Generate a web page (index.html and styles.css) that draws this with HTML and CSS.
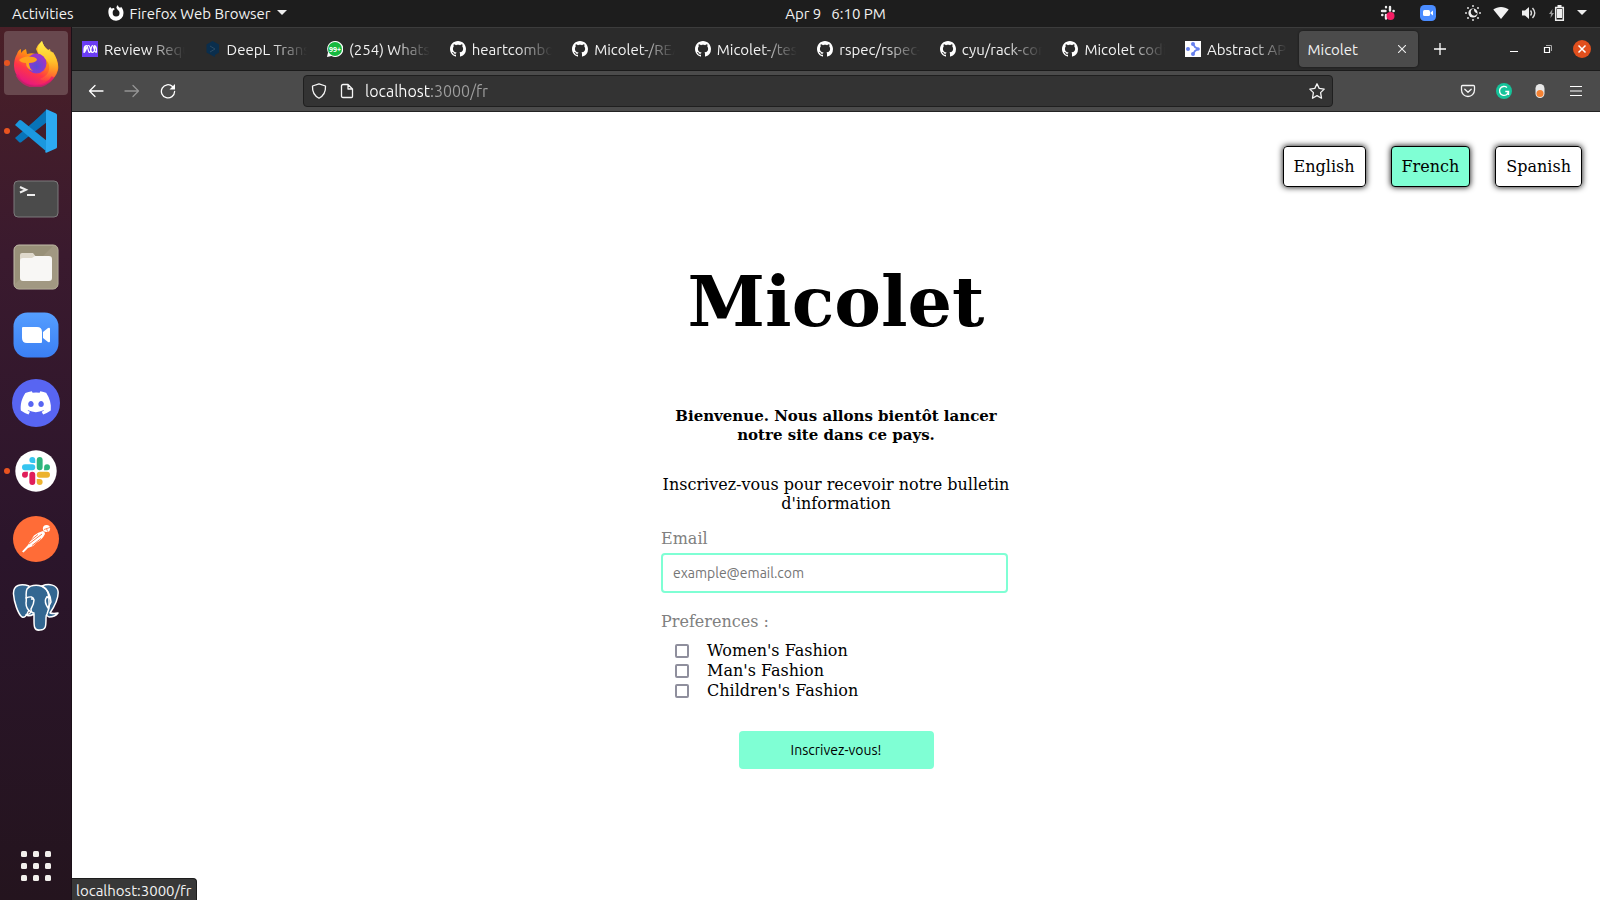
FILE: index.html
```html
<!DOCTYPE html>
<html lang="fr">
<head>
<meta charset="utf-8">
<title>Micolet</title>
<link rel="stylesheet" href="styles.css">
</head>
<body>
<svg class="defs" aria-hidden="true">
  <symbol id="github" viewBox="0 0 16 16"><path fill="#fff" d="M8 0C3.58 0 0 3.58 0 8c0 3.54 2.29 6.53 5.47 7.59.4.07.55-.17.55-.38 0-.19-.01-.82-.01-1.49-2.01.37-2.53-.49-2.69-.94-.09-.23-.48-.94-.82-1.13-.28-.15-.68-.52-.01-.53.63-.01 1.08.58 1.23.82.72 1.21 1.87.87 2.33.66.07-.52.28-.87.51-1.07-1.78-.2-3.64-.89-3.64-3.95 0-.87.31-1.59.82-2.15-.08-.2-.36-1.02.08-2.12 0 0 .67-.21 2.2.82.64-.18 1.32-.27 2-.27s1.36.09 2 .27c1.53-1.04 2.2-.82 2.2-.82.44 1.1.16 1.92.08 2.12.51.56.82 1.27.82 2.15 0 3.07-1.87 3.75-3.65 3.95.29.25.54.73.54 1.48 0 1.07-.01 1.93-.01 2.2 0 .21.15.46.55.38A8.01 8.01 0 0 0 16 8c0-4.42-3.58-8-8-8z"/></symbol>
  <symbol id="slack-blue" viewBox="0 0 24 24"><path d="M8.834 5.042a2.528 2.528 0 0 1-2.521-2.52A2.528 2.528 0 0 1 8.834 0a2.528 2.528 0 0 1 2.521 2.522v2.52H8.834zM8.834 6.313a2.528 2.528 0 0 1 2.521 2.521 2.528 2.528 0 0 1-2.521 2.521H2.522A2.528 2.528 0 0 1 0 8.834a2.528 2.528 0 0 1 2.522-2.521h6.312z"/></symbol>
</svg>
<header class="topbar">
  <div class="topbar-left">
    <button class="top-item" type="button">Activities</button>
    <button class="top-item app-menu" type="button">
      <svg width="16" height="16" viewBox="0 0 16 16"><path fill="#fff" fill-rule="evenodd" d="M1 3.2 2.2 2l1.2 1.5L6 3l.6 1.4C5 5 4.500 6.500 4.700 8a3.400 3.400 0 0 0 6.800.2c.1-1.800-1-2.800-2.300-4C7.800 2.800 8.500 1 10 0c-.1 1.500.9 2 2.100 3l.9-1.200c1.500 1.500 2.500 3.600 2.500 6.200A7.500 7.500 0 0 1 .5 8.500C.2 6.500.4 4.700 1 3.200z"/></svg>
      <span>Firefox Web Browser</span>
      <svg width="10" height="6" viewBox="0 0 10 6"><path fill="#eee" d="M0 0h10L5 5z"/></svg>
    </button>
  </div>
  <button class="top-item clock" type="button"><span>Apr 9</span><span>6:10 PM</span></button>
  <div class="tray">
    <svg class="tray-slack" width="16" height="16" viewBox="0 0 16 16"><g stroke="#eee" stroke-width="2.400" stroke-linecap="round"><path d="M2 6h3.500M6 2.200V2M10 2v3.500M13.500 6h.2M2.200 10h.2M6 10v3.500"/></g><circle cx="10.500" cy="11" r="4" fill="#f51d64"/></svg>
    <svg class="tray-zoom" width="16" height="16" viewBox="0 0 16 16"><rect width="16" height="16" rx="4.500" fill="#4a8cff"/><rect x="3" y="5" width="7" height="6" rx="1.500" fill="#fff"/><path fill="#fff" d="m10.500 7.500 2.500-2v5l-2.500-2z"/></svg>
    <svg width="16" height="16" viewBox="0 0 16 16"><circle cx="8" cy="8" r="4.600" fill="#eee"/><path fill="#1d1d1d" d="M9 3.800a3.400 3.400 0 1 0 3.300 4.700A4 4 0 0 1 9 3.800z"/><g fill="#ddd"><circle cx="8" cy="1" r="1"/><circle cx="8" cy="15" r="1"/><circle cx="1" cy="8" r="1"/><circle cx="15" cy="8" r="1"/><circle cx="3" cy="3" r="1"/><circle cx="13" cy="3" r="1"/><circle cx="3" cy="13" r="1"/><circle cx="13" cy="13" r="1"/></g></svg>
    <svg width="16" height="16" viewBox="0 0 16 16"><path fill="#f2f2f2" d="M.3 4.600C4.500 1 11.500 1 15.700 4.600L8 14z"/></svg>
    <svg width="16" height="16" viewBox="0 0 16 16"><path fill="#eee" d="M1 5.500h3L8 2v12l-4-3.500H1z"/><path fill="none" stroke="#ddd" stroke-width="1.400" d="M9.500 5.500q2 2.500 0 5M11.500 3q4.500 5 0 10"/></svg>
    <svg width="16" height="16" viewBox="0 0 16 16"><path fill="#999" d="M3.500 4 0 9h2l-.5 4L5 8H3z"/><path fill="#eee" d="M8 4h5v9H8z"/><path fill="none" stroke="#eee" stroke-width="1.500" d="M6.700 2.500h7.600v12.700H6.700z"/><path fill="#eee" d="M8.500 0h4v2h-4z"/></svg>
    <svg width="10" height="6" viewBox="0 0 10 6"><path fill="#eee" d="M0 0h10L5 5z"/></svg>
  </div>
</header>
<div class="desktop">
  <nav class="dock" aria-label="Dock">
    <button class="dock-item running focused" type="button" aria-label="Firefox">
      <svg width="48" height="48" viewBox="0 0 48 48"><defs><linearGradient id="ff" x1=".8" y1="0" x2=".3" y2="1"><stop offset="0" stop-color="#fff44f"/><stop offset=".4" stop-color="#ff980e"/><stop offset=".7" stop-color="#ff3647"/><stop offset="1" stop-color="#e31587"/></linearGradient><linearGradient id="fy" x1="0" y1="0" x2="0" y2="1"><stop offset="0" stop-color="#fff04a"/><stop offset=".5" stop-color="#ffc32b"/><stop offset="1" stop-color="#ff7a2e" stop-opacity=".2"/></linearGradient><radialGradient id="fp" cx=".5" cy=".65"><stop offset="0" stop-color="#594bd8"/><stop offset="1" stop-color="#9b36c8"/></radialGradient></defs>
      <path fill="url(#ff)" d="M5 15c1-3 2-4 4-5v4q2-3 5-4l1 5q8-2 12 2L24 10q2-5 6-8 1 5 6 9l2-1 1 4 2-1c4 6 6 12 5 18A22.300 20.500 0 0 1 2 27q0-7 3-12z"/><path fill="url(#fy)" d="M30 2q1 5 6 9l2 2 1-1c8 9 9 20 2 27-5 4-10 3-13 1 7-3 10-7 9-14-1-6-8-8-11-13-1-4 1-8 4-11z"/><circle cx="24.500" cy="24.500" r="10" fill="url(#fp)"/><path fill="#ffa11c" d="M7 21q5-5 14-3 4 1 4 3-2 3-8 3 0 5 4 8-7-2-7-8-5 0-7-3z"/><path fill="none" stroke="#e31572" stroke-width="3" opacity=".7" d="M5 36a20 18 0 0 0 36 2"/></svg>
    </button>
    <button class="dock-item running" type="button" aria-label="Visual Studio Code">
      <svg width="48" height="48" viewBox="0 0 48 48"><path fill="#0874b8" d="m3 31 4 4q1 1 2.500 0L35 15V3z"/><path fill="#1b98df" d="m3 18 4-4.500q1-1 2.500 0L35 34v11z"/><path fill="#0874b8" d="M18 19 34 3v12L24 23z"/><path fill="#2caaf2" d="M34 3q0-1 1-.5l9 4q1 .5 1 1.500v32q0 1-1 1.500l-9 4q-1 .5-2-.5 1-1 1-3z"/></svg>
    </button>
    <button class="dock-item" type="button" aria-label="Terminal">
      <svg width="48" height="48" viewBox="0 0 48 48"><rect x="2" y="6" width="44" height="36" rx="4" fill="#4b4b4b" stroke="#7d7b7c"/><path fill="none" stroke="#eee" stroke-width="2" d="m8 12 6 2.800L8 17.500M15 20h8"/></svg>
    </button>
    <button class="dock-item" type="button" aria-label="Files">
      <svg width="48" height="48" viewBox="0 0 48 48"><rect x="2" y="2" width="44" height="44" rx="5" fill="#989078" stroke="#c2bca9"/><path fill="#a69f89" d="M2 42 42 2q4 0 4 5v34q0 5-5 5H7z" opacity=".6"/><path fill="#dfd9cc" d="M8 12q0-2 2-2h11l4 5v8H8z"/><path fill="#f8f7f5" d="M8 18q0-3 3-3h9l3-2h14q3 0 3 3v19q0 3-3 3H11q-3 0-3-3z"/></svg>
    </button>
    <button class="dock-item" type="button" aria-label="Zoom">
      <svg width="48" height="48" viewBox="0 0 48 48"><defs><linearGradient id="zg" x2="0" y2="1"><stop stop-color="#559eff"/><stop offset="1" stop-color="#3b7ff4"/></linearGradient></defs><rect x="1.500" y="1.500" width="45" height="45" rx="14" fill="url(#zg)"/><path fill="#fff" d="M10 17q0-1 1-1h14q5 0 5 5v10q0 1-1 1H15q-5 0-5-5zM31 21l5-4q2-1 2 1v12q0 2-2 1l-5-4z"/></svg>
    </button>
    <button class="dock-item" type="button" aria-label="Discord">
      <svg width="48" height="48" viewBox="0 0 48 48"><circle cx="24" cy="24" r="24" fill="#5865f2"/><g transform="translate(8.700 8.500) scale(1.275)"><path fill="#fff" d="M20.317 4.370a19.791 19.791 0 0 0-4.885-1.515c-.21.375-.444.864-.608 1.250a18.270 18.270 0 0 0-5.487 0c-.164-.386-.4-.875-.617-1.250A19.736 19.736 0 0 0 3.677 4.370C.533 9.046-.319 13.580.1 18.058a19.900 19.900 0 0 0 5.993 3.030c.462-.63.874-1.295 1.226-1.994a13 13 0 0 1-1.872-.892l.372-.292a14.200 14.200 0 0 0 12.062 0l.373.292a12.300 12.300 0 0 1-1.873.892c.36.698.772 1.362 1.225 1.993a19.840 19.840 0 0 0 6.002-3.030c.5-5.177-.838-9.674-3.549-13.660zM8.020 15.331c-1.183 0-2.157-1.085-2.157-2.419s.956-2.419 2.157-2.419c1.210 0 2.176 1.096 2.157 2.420 0 1.333-.956 2.418-2.157 2.418zm7.975 0c-1.183 0-2.157-1.085-2.157-2.419s.955-2.419 2.157-2.419c1.210 0 2.176 1.096 2.157 2.420 0 1.333-.946 2.418-2.157 2.418z"/></g></svg>
    </button>
    <button class="dock-item running" type="button" aria-label="Slack">
      <svg width="48" height="48" viewBox="0 0 48 48"><circle cx="24" cy="24" r="20.700" fill="#fff"/><g fill="#36c5f0"><use href="#slack-blue" x="10" y="10" width="28" height="28"/></g><g fill="#2eb67d" transform="rotate(90 24 24)"><use href="#slack-blue" x="10" y="10" width="28" height="28"/></g><g fill="#ecb22e" transform="rotate(180 24 24)"><use href="#slack-blue" x="10" y="10" width="28" height="28"/></g><g fill="#e01e5a" transform="rotate(270 24 24)"><use href="#slack-blue" x="10" y="10" width="28" height="28"/></g></svg>
    </button>
    <button class="dock-item" type="button" aria-label="Postman">
      <svg width="48" height="48" viewBox="0 0 48 48"><circle cx="24" cy="24" r="23" fill="#ff6c37"/><circle cx="34.500" cy="13.500" r="3.600" fill="#fff"/><path stroke="#ff6c37" stroke-width=".8" fill="none" d="m32 14.500 6-2M34.500 13.500l1 3"/><path fill="#fff" d="M31 16q2 1 2 3-3 6-9 9l-3 3-5 2-4.500 4.500-1.500-1 6-6.500 2-3.500 4-6q4-3.500 9-4.500z"/><path stroke="#ff6c37" stroke-width=".9" fill="none" d="m17 29 13-10M18 26l8-6.500M20 30.500l9-7"/></svg>
    </button>
    <button class="dock-item" type="button" aria-label="PostgreSQL">
      <svg width="48" height="48" viewBox="0 0 48 48"><g fill="#336791" stroke="#fff" stroke-width="1.500" stroke-linejoin="round" stroke-linecap="round"><path d="M30 3c7-3 15-1 16 5 1 7-4 16-8 22q4 1 8 0-3 4-9 4l-6-4z"/><path d="M17 3C9 0 1 2 1.500 11 2 19 6 31 10 34q3 1 5-3l3-6z"/><path d="M15 6c4-5 14-5 19 0 4 4 3 15 3 19l-2 6q-1 1-1 4c0 8 0 12-6 12-6 1-6-4-6-10v-6q-5 3-8 1 4-1 5-3-5-3-5-9c1-5-1-10 1-14z"/><path fill="none" d="M14 15q7-3 8 2 0 4-3 9 0 4 3 4M30 3q8 5 9 16l-3 6q-4-6-2-10 3-2 4 1"/></g><path stroke="#fff" stroke-width="1.500" d="M19 16h2M34 14h2"/></svg>
    </button>
    <button class="dock-item apps" type="button" aria-label="Show Applications">
      <svg width="30" height="30" viewBox="0 0 30 30"><g fill="#f2efec"><rect width="6" height="6" rx="1.500"/><rect x="12" width="6" height="6" rx="1.500"/><rect x="24" width="6" height="6" rx="1.500"/><rect y="12" width="6" height="6" rx="1.500"/><rect x="12" y="12" width="6" height="6" rx="1.500"/><rect x="24" y="12" width="6" height="6" rx="1.500"/><rect y="24" width="6" height="6" rx="1.500"/><rect x="12" y="24" width="6" height="6" rx="1.500"/><rect x="24" y="24" width="6" height="6" rx="1.500"/></g></svg>
    </button>
  </nav>
  <div class="browser">
    <div class="tabstrip">
      <div class="tabs" role="tablist">
        <button class="tab" role="tab" type="button"><svg width="16" height="16" viewBox="0 0 16 16"><path fill="#6b3df5" d="M0 0h16v16H0z"/><path fill="none" stroke="#fff" stroke-width="1.200" d="M1.500 11.500C3 11 3 4.500 4.500 4.500S6 11.500 7.500 11.500 9 4.500 10.500 4.500s1.500 7 4 7M1.500 11.500c3 0 2.500-7 5-7s1.500 7 4 7 3-7 1.500-7M4.500 4.500q-3 0-2.500 7M12 4.500q3 0 2.500 7"/></svg><span>Review Requ</span></button>
        <button class="tab" role="tab" type="button"><svg width="16" height="16" viewBox="0 0 16 16"><path fill="#0a2e4d" d="m7.500 0 6.500 3.500v8L10 14v2l-3-1.500-5.500-3v-8z"/><path fill="none" stroke="#2c4a63" d="m5 5 5 3-5 3"/></svg><span>DeepL Trans</span></button>
        <button class="tab" role="tab" type="button"><svg width="16" height="16" viewBox="0 0 16 16"><path fill="#fff" d="M8 0a8 8 0 1 1-3.500 15L0 16l1-4.500A8 8 0 0 1 8 0z"/><circle cx="8" cy="8" r="7" fill="#16b83f"/><text x="8" y="11" class="badge-text">99+</text></svg><span>(254) Whats</span></button>
        <button class="tab" role="tab" type="button"><svg width="16" height="16"><use href="#github"/></svg><span>heartcombo</span></button>
        <button class="tab" role="tab" type="button"><svg width="16" height="16"><use href="#github"/></svg><span>Micolet-/REA</span></button>
        <button class="tab" role="tab" type="button"><svg width="16" height="16"><use href="#github"/></svg><span>Micolet-/tes</span></button>
        <button class="tab" role="tab" type="button"><svg width="16" height="16"><use href="#github"/></svg><span>rspec/rspec-</span></button>
        <button class="tab" role="tab" type="button"><svg width="16" height="16"><use href="#github"/></svg><span>cyu/rack-cor</span></button>
        <button class="tab" role="tab" type="button"><svg width="16" height="16"><use href="#github"/></svg><span>Micolet codi</span></button>
        <button class="tab" role="tab" type="button"><svg width="16" height="16" viewBox="0 0 16 16"><path fill="#fff" d="M0 0h16v16H0z"/><g fill="#6680ee"><circle cx="3" cy="8" r="2"/><circle cx="8" cy="3" r="2"/><circle cx="8" cy="13" r="2"/><circle cx="13" cy="8" r="1.800"/></g><path fill="none" stroke="#6680ee" stroke-width="1.800" d="m8 3 2 3 3 2-3 2-2 3"/></svg><span>Abstract AP</span></button>
        <div class="tab active"><button class="tab-title" role="tab" aria-selected="true" type="button">Micolet</button><button class="icon-button" type="button" aria-label="Close tab"><svg width="8" height="8" viewBox="0 0 8 8"><path stroke="#eee" stroke-width="1.100" d="m0 0 8 8M8 0 0 8"/></svg></button></div>
      </div>
      <button class="icon-button new-tab" type="button" aria-label="New tab"><svg width="12" height="12" viewBox="0 0 12 12"><path stroke="#fff" stroke-width="1.300" d="M6 0v12M0 6h12"/></svg></button>
      <div class="window-controls">
        <button class="icon-button" type="button" aria-label="Minimize"><svg width="16" height="16" viewBox="0 0 16 16"><path fill="#fff" d="M4 10h8v1H4z"/></svg></button>
        <button class="icon-button" type="button" aria-label="Restore"><svg width="16" height="16" viewBox="0 0 16 16"><path fill="none" stroke="#fff" stroke-width="1.200" d="M4.500 6.500h5v5h-5z"/><path fill="none" stroke="#aaa" d="M6 4.500h5.500V10"/></svg></button>
        <button class="icon-button" type="button" aria-label="Close"><svg width="18" height="18" viewBox="0 0 18 18"><circle cx="9" cy="9" r="9" fill="#e04f1d"/><path stroke="#fff" stroke-width="1.500" d="m5.500 5.500 7 7m0-7-7 7"/></svg></button>
      </div>
    </div>
    <div class="toolbar">
      <div class="tool-group">
        <button class="icon-button" type="button" aria-label="Back"><svg width="16" height="16" viewBox="0 0 16 16"><path fill="none" stroke="#fff" stroke-width="1.300" stroke-linecap="round" stroke-linejoin="round" d="M15 8H1.500M7 2.500 1.500 8 7 13.500"/></svg></button>
        <button class="icon-button" type="button" aria-label="Forward"><svg width="16" height="16" viewBox="0 0 16 16"><path fill="none" stroke="#949494" stroke-width="1.300" stroke-linecap="round" stroke-linejoin="round" d="M1 8h13.500M9 2.500 14.500 8 9 13.500"/></svg></button>
        <button class="icon-button" type="button" aria-label="Reload"><svg width="16" height="16" viewBox="0 0 16 16"><path fill="none" stroke="#fff" stroke-width="1.300" stroke-linecap="round" d="M12.500 3.500A6.600 6.600 0 1 0 14.600 8.500"/><path fill="#fff" d="M15 1v5.500H9.500z"/></svg></button>
      </div>
      <div class="urlbar">
        <svg width="16" height="16" viewBox="0 0 16 16"><path fill="none" stroke="#f5f5f5" stroke-width="1.300" stroke-linejoin="round" d="M8 .8 14.500 3q.5 8.500-6.500 12.200Q1 11.500 1.500 3z"/></svg>
        <svg width="16" height="16" viewBox="0 0 16 16"><path fill="none" stroke="#f5f5f5" stroke-width="1.300" stroke-linejoin="round" d="M4 1.500h5l4.500 4.500v7.500q0 1-1 1H4q-1.500 0-1.500-1.500V3Q2.500 1.500 4 1.500zM9 1.500V6h4.500"/></svg>
        <input class="url" type="text" aria-label="Address" value="localhost:3000/fr">
        <button class="icon-button star" type="button" aria-label="Bookmark"><svg width="16" height="16" viewBox="0 0 16 16"><path fill="none" stroke="#f5f5f5" stroke-width="1.300" stroke-linejoin="round" d="m8 .8 2.200 4.600 5 .7-3.600 3.500.9 5.600L8 12.600l-4.500 2.600.9-5.600L.8 6.100l5-.7z"/></svg></button>
      </div>
      <div class="tool-group">
        <button class="icon-button" type="button" aria-label="Pocket"><svg width="16" height="16" viewBox="0 0 16 16"><path fill="none" stroke="#f5f5f5" stroke-width="1.300" stroke-linecap="round" stroke-linejoin="round" d="M2.500 2.500h11q1 0 1 1V7a6.500 6.500 0 0 1-13 0V3.500q0-1 1-1zM4.800 6.200 8 9.300l3.200-3.100"/></svg></button>
        <button class="icon-button" type="button" aria-label="Grammarly"><svg width="16" height="16" viewBox="0 0 16 16"><circle cx="8" cy="8" r="8" fill="#15c39a"/><path fill="none" stroke="#fff" stroke-width="1.400" d="M11 4.500A4.500 4.500 0 1 0 12.500 8.500H9.300M12.500 8.500V12"/></svg></button>
        <button class="icon-button" type="button" aria-label="Toggle extension"><svg width="16" height="16" viewBox="0 0 16 16"><rect x="3.500" y="1" width="9" height="14" rx="4.500" fill="#e8e8e8"/><circle cx="8" cy="10.500" r="3.500" fill="#f58233"/></svg></button>
        <button class="icon-button" type="button" aria-label="Menu"><svg width="16" height="16" viewBox="0 0 16 16"><path stroke="#fff" stroke-width="1.200" d="M2 3.500h12M2 8h12M2 12.500h12"/></svg></button>
      </div>
    </div>
    <main class="page">
      <nav class="languages" aria-label="Language">
        <a class="language" href="#en">English</a>
        <a class="language current" href="#fr">French</a>
        <a class="language" href="#es">Spanish</a>
      </nav>
      <form class="signup">
        <h1>Micolet</h1>
        <h2>Bienvenue. Nous allons bientôt lancer notre site dans ce pays.</h2>
        <p>Inscrivez-vous pour recevoir notre bulletin d'information</p>
        <label class="field-label" for="email">Email</label>
        <input class="email" id="email" type="email" placeholder="example@email.com">
        <fieldset>
          <legend class="field-label">Preferences :</legend>
          <label class="choice"><input type="checkbox">Women's Fashion</label>
          <label class="choice"><input type="checkbox">Man's Fashion</label>
          <label class="choice"><input type="checkbox">Children's Fashion</label>
        </fieldset>
        <button class="submit" type="submit">Inscrivez-vous!</button>
      </form>
      <div class="status">localhost:3000/fr</div>
    </main>
  </div>
</div>
</body>
</html>
```
FILE: styles.css
```css
* { box-sizing: border-box; }
html, body { height: 100%; }
body {
  margin: 0;
  display: flex;
  flex-direction: column;
  font-family: "Ubuntu", "Noto Sans", sans-serif;
  font-size: 15px;
  color: #f2f2f2;
  background: #fff;
}
button { font: inherit; color: inherit; border: 0; padding: 0; background: none; }
svg { display: block; flex: none; }
.defs { position: absolute; width: 0; height: 0; }

.topbar {
  flex: none;
  height: 27px;
  display: grid;
  grid-template-columns: 1fr auto 1fr;
  align-items: center;
  padding: 0 13px 1px 12px;
  background: #1d1d1d;
}
.topbar-left, .top-item { display: flex; align-items: center; white-space: nowrap; }
.topbar-left { gap: 34px; }
.app-menu { gap: 6px; }
.clock { gap: 10px; padding-left: 72px; }
.tray { display: flex; align-items: center; justify-content: flex-end; gap: 12px; }
.tray-slack { margin-right: 12px; }
.tray-zoom { margin-right: 17px; }

.desktop { flex: 1; min-height: 0; display: flex; }
.dock {
  flex: none;
  width: 72px;
  display: flex;
  flex-direction: column;
  align-items: center;
  gap: 4px;
  padding: 4px 0 2px;
  background: linear-gradient(#4a1f27, #3a1a2e 26%, #2b152b 60%, #24141e);
  border-right: 1px solid #1a1018;
}
.dock-item {
  position: relative;
  width: 64px;
  height: 64px;
  display: grid;
  place-items: center;
  border-radius: 4px;
}
.focused { background: #68484e; }
.running::before {
  content: "";
  position: absolute;
  left: 0;
  top: 29px;
  width: 6px;
  height: 6px;
  border-radius: 3px;
  background: #e95420;
}
.apps { margin-top: auto; }

.browser { flex: 1; min-width: 0; display: flex; flex-direction: column; }
.tabstrip {
  flex: none;
  height: 44px;
  display: flex;
  align-items: center;
  padding-right: 9px;
  background: #2b2b2b;
  border-top: 1px solid #3c3c3c;
  border-bottom: 1px solid #1b1b1b;
}
.tabs { flex: 1; min-width: 0; display: flex; gap: 4px; padding: 0 4px 0 2px; }
.tab {
  flex: 1 1 0;
  min-width: 0;
  height: 36px;
  display: flex;
  align-items: center;
  gap: 6px;
  padding: 0 8px;
  border-radius: 4px;
}
.tab > span {
  flex: 1;
  min-width: 0;
  overflow: hidden;
  white-space: nowrap;
  text-align: left;
  -webkit-mask-image: linear-gradient(to left, transparent, #000 36px);
  mask-image: linear-gradient(to left, transparent, #000 36px);
}
.active { background: #4b4b4b; box-shadow: 0 0 2px #111; }
.tab-title { flex: 1; text-align: left; }
.active .icon-button { width: 16px; }
.badge-text { font: bold 7px "Noto Sans", sans-serif; text-anchor: middle; fill: #fff; }
.icon-button { flex: none; width: 36px; height: 32px; display: grid; place-items: center; }
.new-tab { margin-right: 39px; }
.window-controls { display: flex; }
.window-controls .icon-button { width: 34px; }
.window-controls .icon-button:last-child { margin-right: -8px; }
.toolbar {
  flex: none;
  height: 41px;
  display: flex;
  align-items: center;
  padding: 0 6px;
  background: #4b4b4b;
  border-bottom: 1px solid #222;
}
.tool-group { display: flex; }
.urlbar {
  flex: 1;
  margin: 0 117px;
  height: 32px;
  display: flex;
  align-items: center;
  gap: 12px;
  padding-left: 7px;
  background: #333;
  border: 1px solid #1f1f1f;
  border-radius: 4px;
}
.url {
  flex: 1;
  min-width: 0;
  margin-left: -2px;
  padding: 0;
  border: 0;
  outline: 0;
  font: 16px "Ubuntu", "Noto Sans", sans-serif;
  color: transparent;
  background: linear-gradient(to right, #fff 66px, #a0a0a0 66px);
  -webkit-background-clip: text;
  background-clip: text;
}
.star { width: 30px; }

.page {
  position: relative;
  flex: 1;
  padding: 34px 18px 0;
  color: #000;
  background: #fff;
  font: 16px/19px "DejaVu Serif", serif;
}
.languages { display: flex; justify-content: flex-end; gap: 25px; }
.language {
  padding: 10px;
  border: 1px solid #000;
  border-radius: 4px;
  color: #000;
  text-decoration: none;
  box-shadow: 0 0 6px #000;
}
.current { background: #7fffd4; }
.signup {
  width: 350px;
  margin: 74px auto 0;
  display: flex;
  flex-direction: column;
  text-align: center;
}
h1 { margin: 0 0 64px; font-size: 70px; line-height: 82px; }
h2 { margin: 0 0 30px; font-size: 15px; line-height: 19px; }
p { margin: 0 0 16px; }
.field-label { padding: 0; color: #808080; text-align: left; }
.email {
  width: 99%;
  height: 40px;
  margin: 5px 0 19px;
  padding: 0 10px;
  border: 2px solid #7fffd4;
  border-radius: 4px;
  font: 14px "Ubuntu", "Noto Sans", sans-serif;
}
.email::placeholder { color: #757575; }
fieldset { margin: 0 0 30px; padding: 0; border: 0; }
legend { margin-bottom: 10px; }
.choice { display: flex; align-items: center; gap: 18px; padding-left: 14px; line-height: 20px; }
.choice input {
  appearance: none;
  width: 14px;
  height: 14px;
  margin: 0;
  border: 2px solid #8f8f9d;
  border-radius: 2px;
  background: #fff;
}
.submit {
  align-self: center;
  width: 195px;
  height: 38px;
  border-radius: 4px;
  background: #7fffd4;
  font: 14px "Ubuntu", "Noto Sans", sans-serif;
}
.status {
  position: absolute;
  left: 0;
  bottom: 0;
  padding: 2px 4px 0;
  border: 1px solid #1c1c1c;
  border-width: 1px 1px 0 0;
  border-radius: 0 4px 0 0;
  background: #383838;
  color: #f2f2f2;
  font: 15px/19px "Ubuntu", "Noto Sans", sans-serif;
}
```
